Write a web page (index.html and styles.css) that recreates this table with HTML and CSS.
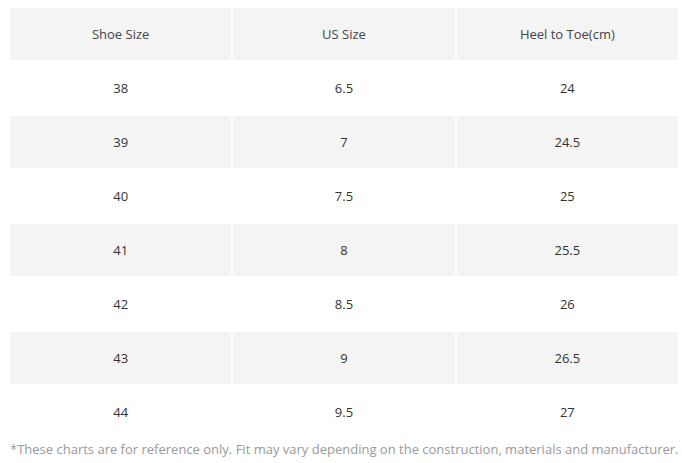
FILE: index.html
```html
<!DOCTYPE html>
<html>
<head>
<meta charset="utf-8">
<link rel="stylesheet" href="styles.css">
</head>
<body>
<div class="wrap">
  <table class="size-table">
    <thead>
      <tr class="shade"><th>Shoe Size</th><th>US Size</th><th>Heel to Toe(cm)</th></tr>
    </thead>
    <tbody>
      <tr><td>38</td><td>6.5</td><td>24</td></tr>
      <tr class="shade"><td>39</td><td>7</td><td>24.5</td></tr>
      <tr><td>40</td><td>7.5</td><td>25</td></tr>
      <tr class="shade"><td>41</td><td>8</td><td>25.5</td></tr>
      <tr><td>42</td><td>8.5</td><td>26</td></tr>
      <tr class="shade"><td>43</td><td>9</td><td>26.5</td></tr>
      <tr><td>44</td><td>9.5</td><td>27</td></tr>
    </tbody>
  </table>
  <p class="note">*These charts are for reference only. Fit may vary depending on the construction, materials and manufacturer.</p>
</div>
</body>
</html>
```
FILE: styles.css
```css
html, body {
  margin: 0;
  padding: 0;
  background: #fff;
}
.wrap {
  padding: 6px 2px 0 8px;
  font-family: "Open Sans", "Liberation Sans", sans-serif;
  font-size: 13px;
}
.size-table {
  width: 672px;
  border-collapse: separate;
  border-spacing: 2px;
  table-layout: fixed;
}
.size-table th,
.size-table td {
  height: 52px;
  padding: 0;
  text-align: center;
  vertical-align: middle;
  font-weight: normal;
  color: #333;
}
.size-table th {
  color: #444;
}
.shade th,
.shade td {
  background: #f4f4f4;
}
.note {
  margin: 0;
  padding-left: 2px;
  color: #999;
  line-height: 18px;
  white-space: nowrap;
}
```
